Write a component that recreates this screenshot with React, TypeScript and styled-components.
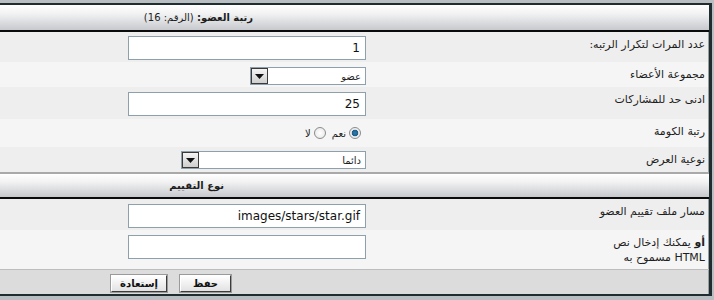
import { FC, ReactNode } from 'react'
import styled, { createGlobalStyle } from 'styled-components'

const Global = createGlobalStyle`
  html, body {
    margin: 0;
    padding: 0;
    background: #b9bec2;
  }
  body {
    font-family: "DejaVu Sans", "Noto Sans", sans-serif;
    font-size: 11px;
    color: #1e1e1e;
  }
`

const Page = styled.div`
  padding: 3px 2px 0 0;
  width: 714px;
  height: 300px;
  box-sizing: border-box;
  overflow: hidden;
`

const Panel = styled.div`
  direction: rtl;
  border-top: 2px solid #1f2c30;
  border-right: 3px solid #1f2c30;
  border-bottom: 2px solid #1f2c30;
  background: #eeeeee;
`

const Head = styled.div<{ $pad: number; $h: number; $top?: boolean }>`
  height: ${(p) => p.$h}px;
  display: flex;
  align-items: center;
  padding-right: ${(p) => p.$pad}px;
  background: linear-gradient(#ffffff 0%, #f2f2f3 35%, #c6c9cd 100%);
  border-top: ${(p) => (p.$top ? '0' : '2px solid #a9a9a9')};
  border-bottom: 2px solid #0b0b0b;
  font-size: 10px;
  white-space: nowrap;
`

const Bold = styled.b`
  font-weight: bold;
`

const Row = styled.div<{ $h: number; $alt?: boolean }>`
  display: flex;
  height: ${(p) => p.$h}px;
  background: ${(p) => (p.$alt ? '#f5f5f5' : '#eeeeee')};
  box-shadow: inset -1px 0 0 #9a9fa3;
`

const Label = styled.div`
  width: 337px;
  padding: 5px 4px 0 0;
  line-height: 15px;
  box-sizing: border-box;
  font-size: 11px;
`

const Field = styled.div<{ $top: number }>`
  flex: 1;
  padding: ${(p) => p.$top}px 6px 0 0;
`

const TextBox = styled.div`
  width: 238px;
  height: 24px;
  box-sizing: border-box;
  border: 1px solid #8fa0ad;
  background: #ffffff;
  display: flex;
  align-items: center;
  padding: 0 5px;
  font-size: 12px;
  direction: rtl;
  color: #111;
`

const Ltr = styled.span`
  direction: ltr;
  unicode-bidi: embed;
`

const Select = styled.div<{ $w: number }>`
  width: ${(p) => p.$w}px;
  height: 18px;
  box-sizing: border-box;
  border: 1px solid #8fa0ad;
  background: #ffffff;
  display: flex;
  align-items: center;
  justify-content: space-between;
  font-size: 10px;
`

const SelectText = styled.span`
  padding-right: 4px;
`

const Arrow = styled.span`
  width: 17px;
  height: 16px;
  box-sizing: border-box;
  border: 1px solid #3a3a3a;
  background: linear-gradient(#f4f4f4, #cfcfcf);
  display: flex;
  align-items: center;
  justify-content: center;
`

const Radios = styled.div`
  display: flex;
  align-items: center;
  gap: 6px;
  padding: 8px 5px 0 0;
  font-size: 10px;
`

const RadioItem = styled.label`
  display: flex;
  align-items: center;
  gap: 3px;
`

const Dot = styled.span<{ $on?: boolean }>`
  width: 12px;
  height: 12px;
  border-radius: 50%;
  box-sizing: border-box;
  border: 1px solid #8b8b8b;
  background: ${(p) =>
    p.$on
      ? 'radial-gradient(circle, #2e7fb0 0, #1d5f8c 3px, #e8e8e8 3.6px, #ffffff 100%)'
      : 'radial-gradient(circle, #ffffff 0, #ececec 70%, #d2d2d2 100%)'};
`

const Footer = styled.div`
  height: 25px;
  border-top: 1px solid #bdbdbd;
  background: #dcdcdc;
  box-shadow: inset -1px 0 0 #9a9fa3;
  display: flex;
  align-items: center;
  gap: 13px;
  padding: 2px 478px 0 0;
  box-sizing: border-box;
`

const Button = styled.button<{ $w: number }>`
  width: ${(p) => p.$w}px;
  height: 17px;
  padding: 0;
  font-family: "DejaVu Sans", sans-serif;
  font-size: 10px;
  font-weight: bold;
  color: #111;
  background: linear-gradient(#ffffff, #e2e2e2);
  border: 1px solid;
  border-color: #ffffff #3c3c3c #3c3c3c #ffffff;
  box-shadow: 0 0 0 1px #9a9a9a;
  display: flex;
  align-items: center;
  justify-content: center;
`

const ArrowIcon: FC = () => (
  <svg width="9" height="5" viewBox="0 0 9 5">
    <path d="M0 0 H9 L4.5 5 Z" fill="#111" />
  </svg>
)

const SelectBox: FC<{ w: number; text: string }> = ({ w, text }) => (
  <Select $w={w}>
    <SelectText>{text}</SelectText>
    <Arrow>
      <ArrowIcon />
    </Arrow>
  </Select>
)

const FormRow: FC<{ label: ReactNode; h: number; top: number; alt?: boolean; children: ReactNode }> = ({
  label,
  h,
  top,
  alt,
  children,
}) => (
  <Row $h={h} $alt={alt}>
    <Label>{label}</Label>
    <Field $top={top}>{children}</Field>
  </Row>
)

const App: FC = () => {
  return (
    <Page>
      <Global />
      <Panel>
        <Head $pad={456} $h={25} $top>
          <Bold>رتبة العضو:</Bold>&nbsp;(الرقم: 16)
        </Head>
        <FormRow label="عدد المرات لتكرار الرتبه:" h={30} top={4}>
          <TextBox>1</TextBox>
        </FormRow>
        <FormRow label="مجموعة الأعضاء" h={25} top={5} alt>
          <SelectBox w={116} text="عضو" />
        </FormRow>
        <FormRow label="ادنى حد للمشاركات" h={32} top={5}>
          <TextBox>25</TextBox>
        </FormRow>
        <FormRow label="رتبة الكومة" h={28} top={0} alt>
          <Radios>
            <RadioItem>
              <Dot $on />
              نعم
            </RadioItem>
            <RadioItem>
              <Dot />
              لا
            </RadioItem>
          </Radios>
        </FormRow>
        <FormRow label="نوعية العرض" h={25} top={4}>
          <SelectBox w={185} text="دائما" />
        </FormRow>
        <Head $pad={485} $h={23}>
          <Bold>نوع التقييم</Bold>
        </Head>
        <FormRow label="مسار ملف تقييم العضو" h={31} top={5}>
          <TextBox>
            <Ltr>images/stars/star.gif</Ltr>
          </TextBox>
        </FormRow>
        <FormRow
          label={
            <>
              <Bold>أو</Bold> يمكنك إدخال نص
              <br />
              HTML مسموح به
            </>
          }
          h={39}
          top={5}
          alt
        >
          <TextBox />
        </FormRow>
        <Footer>
          <Button $w={51}>حفظ</Button>
          <Button $w={56}>إستعادة</Button>
        </Footer>
      </Panel>
    </Page>
  )
}

export default App
